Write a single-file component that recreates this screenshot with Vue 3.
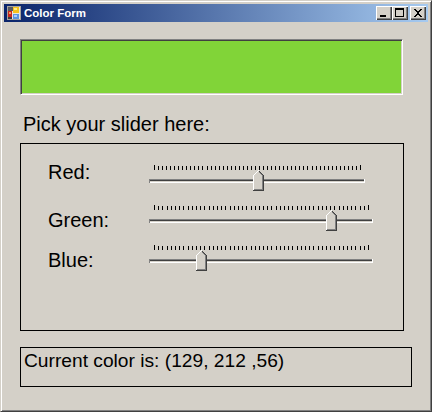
<script setup>
const sliders = [
  { name: 'Red', value: 129, width: 216, cls: 'first' },
  { name: 'Green', value: 212, width: 224, cls: '' },
  { name: 'Blue', value: 56, width: 224, cls: '' },
]
const tickCount = 51
function ticks(width) {
  const span = width - 10
  const out = []
  for (let i = 0; i <= tickCount; i++) {
    out.push({ x: Math.round((i * span) / tickCount) + 5, edge: i === 0 || i === tickCount })
  }
  return out
}
function thumbLeft(s) {
  return Math.round((s.value / 255) * (s.width - 11)) + 'px'
}
</script>

<template>
  <div class="window">
    <header class="title">
      <svg class="app-icon" width="14" height="14" viewBox="0 0 14 14" shape-rendering="crispEdges">
        <rect width="14" height="14" fill="#a8a49c" />
        <rect x="1" y="1" width="12" height="12" fill="#e8e6e0" />
        <rect x="1" y="1" width="5" height="4" fill="#5a5a60" />
        <rect x="6" y="1" width="6" height="6" fill="#f5c21b" />
        <rect x="7" y="2" width="3" height="2" fill="#ffe98a" />
        <rect x="1" y="5" width="4" height="6" fill="#c8261c" />
        <rect x="2" y="6" width="2" height="2" fill="#f0a060" />
        <rect x="1" y="11" width="4" height="2" fill="#3a3a44" />
        <rect x="6" y="8" width="6" height="5" fill="#5c94e0" />
        <rect x="7" y="9" width="3" height="2" fill="#a8d0f8" />
      </svg>
      <span class="caption">Color Form</span>
      <div class="buttons">
        <button class="cap-btn">
          <svg width="12" height="10" viewBox="0 0 12 10" shape-rendering="crispEdges"><rect x="2" y="7" width="6" height="2" fill="#000" /></svg>
        </button>
        <button class="cap-btn">
          <svg width="12" height="10" viewBox="0 0 12 10" shape-rendering="crispEdges"><path d="M1 0h9v9H1zM2 2v6h7V2z" fill="#000" fill-rule="evenodd" /></svg>
        </button>
        <button class="cap-btn close">
          <svg width="12" height="10" viewBox="0 0 12 10" shape-rendering="crispEdges"><path d="M2 1h2v1h1v1h2V2h1V1h2v1H9v1H8v1H7v2h1v1h1v1h1v1H8V8H7V7H5v1H4v1H2V8h1V7h1V6h1V4H4V3H3V2H2z" fill="#000" /></svg>
        </button>
      </div>
    </header>

    <main class="content">
      <div class="swatch"></div>
      <div class="pick">Pick your slider here:</div>
      <section class="group">
        <div v-for="s in sliders" :key="s.name" class="row" :class="s.cls">
          <label class="label">{{ s.name }}:</label>
          <div class="slider" :style="{ width: s.width + 'px' }">
            <svg class="ticks" :width="s.width" height="5" shape-rendering="crispEdges">
              <rect v-for="t in ticks(s.width)" :key="t.x" :x="t.x" :y="t.edge ? 0 : 1" width="1" :height="t.edge ? 5 : 4" fill="#000" />
            </svg>
            <div class="track"></div>
            <svg class="thumb" :style="{ left: thumbLeft(s) }" width="11" height="21" viewBox="0 0 11 21" shape-rendering="crispEdges">
              <polygon points="0,5 5,0 6,0 11,5 11,21 0,21" fill="#d4d0c8" />
              <path d="M5 0h1v1H5zM4 1h1v1H4zM3 2h1v1H3zM2 3h1v1H2zM1 4h1v1H1zM0 5h1v15H0z" fill="#fff" />
              <path d="M6 1h1v1H6zM7 2h1v1H7zM8 3h1v1H8zM9 4h1v1H9zM10 5h1v16H0v-1h10z" fill="#404040" />
              <path d="M6 2h1v1H6zM7 3h1v1H7zM8 4h1v1H8zM9 5h1v15H1v-1h8z" fill="#808080" />
            </svg>
          </div>
        </div>
      </section>
      <div class="status">Current color is: (129, 212 ,56)</div>
    </main>
  </div>
</template>

<style scoped>
.window {
  width: 432px;
  height: 412px;
  box-sizing: border-box;
  background: #d4d0c8;
  border-right: 1px solid #404040;
  border-bottom: 1px solid #404040;
  border-top: 1px solid #d4d0c8;
  border-left: 1px solid #d4d0c8;
  box-shadow: inset 1px 1px 0 #fff, inset -1px -1px 0 #808080;
  padding: 3px;
  font-family: "Liberation Sans", Arial, sans-serif;
  color: #000;
}
.title {
  height: 18px;
  display: flex;
  align-items: center;
  padding-left: 3px;
  padding-right: 2px;
  background: linear-gradient(to right, #0a246a, #a6caf0);
}
.app-icon {
  flex: none;
  margin-right: 3px;
}
.caption {
  color: #fff;
  font-weight: bold;
  font-size: 11.5px;
  line-height: 18px;
}
.buttons {
  margin-left: auto;
  display: flex;
}
.cap-btn {
  width: 16px;
  height: 14px;
  padding: 0;
  box-sizing: border-box;
  background: #d4d0c8;
  border: none;
  box-shadow: inset 1px 1px 0 #fff, inset -1px -1px 0 #404040, inset -2px -2px 0 #808080;
  display: flex;
  align-items: center;
  justify-content: center;
}
.close {
  margin-left: 2px;
}
.content {
  padding: 17px 0 0 16px;
}
.swatch {
  width: 383px;
  height: 56px;
  box-sizing: border-box;
  background: #81d438;
  border-top: 1px solid #808080;
  border-left: 1px solid #808080;
  border-right: 1px solid #fff;
  border-bottom: 1px solid #fff;
  box-shadow: inset 1px 1px 0 #404040, inset -1px -1px 0 #d4d0c8;
}
.pick {
  margin: 18px 0 0 3px;
  font-size: 20px;
  line-height: 23px;
}
.group {
  margin-top: 7px;
  width: 384px;
  height: 188px;
  box-sizing: border-box;
  border: 1px solid #000;
  padding: 21px 0 0 27px;
  display: flex;
  flex-direction: column;
  gap: 14px;
}
.row {
  display: flex;
  height: 26px;
  align-items: flex-start;
}
.label {
  width: 101px;
  flex: none;
  font-size: 20px;
  line-height: 23px;
  margin-top: 4px;
}
.first .label {
  margin-top: -4px;
}
.slider {
  position: relative;
  height: 26px;
}
.ticks {
  display: block;
}
.track {
  margin-top: 9px;
  height: 4px;
  box-sizing: border-box;
  border-left: 1px solid #808080;
  border-right: 1px solid #fff;
  background: linear-gradient(#808080 0 1px, #404040 1px 2px, #d4d0c8 2px 3px, #fff 3px);
}
.thumb {
  position: absolute;
  top: 5px;
}
.status {
  margin-top: 16px;
  width: 392px;
  height: 40px;
  box-sizing: border-box;
  border: 1px solid #000;
  padding: 1px 0 0 3px;
  font-size: 19.2px;
  line-height: 23px;
}
</style>

<style>
html, body { margin: 0; background: #d4d0c8; }
</style>
